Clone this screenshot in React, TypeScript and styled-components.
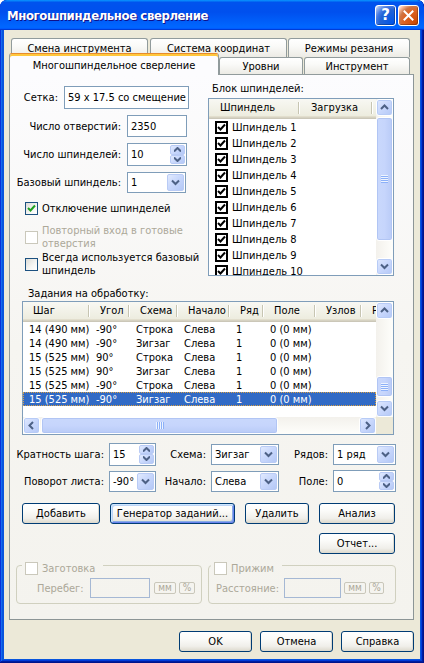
import React from 'react';
import styled, { createGlobalStyle } from 'styled-components';

const UI = `"DejaVu Sans Condensed", "Liberation Sans", sans-serif`;

const GlobalStyle = createGlobalStyle`
  html, body { margin: 0; padding: 0; }
  body { background: #ffffff; font-family: ${UI}; font-size: 11px; color: #000; }
  *, *::before, *::after { box-sizing: border-box; }
`;

/* ---------- window frame ---------- */
const Window = styled.div`
  width: 424px;
  height: 663px;
  display: flex;
  flex-direction: column;
  background: #0855dd;
  border-radius: 7px 7px 0 0;
  overflow: hidden;
  box-shadow: inset -1px -1px #00138c, inset 1px 1px #0831d9, inset -2px -2px #001ea0,
    inset 2px 2px #166aee, inset -3px -3px #003bda, inset 3px 3px #0855dd;
  font-family: ${UI};
  font-size: 11px;
`;

const TitleBar = styled.div`
  flex: 0 0 30px;
  display: flex;
  align-items: center;
  padding: 0 5px 0 7px;
  border-radius: 7px 7px 0 0;
  background: linear-gradient(180deg, #0997ff, #0053ee 8%, #0050ee 40%, #0066ff 88%, #0066ff 93%, #005bff 95%, #003dd7 96%, #003dd7);
`;

const TitleText = styled.div`
  flex: 1;
  color: #fff;
  font-family: "DejaVu Sans Condensed", "Liberation Sans", sans-serif;
  font-weight: bold;
  font-size: 13px;
  letter-spacing: -0.4px;
  text-shadow: 1px 1px #0f1089;
  white-space: nowrap;
`;

const CaptionButtons = styled.div`
  display: flex;
  gap: 2px;
`;

const CaptionBtn = styled.div<{ $kind: 'help' | 'close' }>`
  width: 21px;
  height: 21px;
  border: 1px solid #fff;
  border-radius: 3px;
  display: flex;
  align-items: center;
  justify-content: center;
  color: #fff;
  box-shadow: inset -1px -1px rgba(0, 0, 0, 0.25);
  background: ${p =>
    p.$kind === 'close'
      ? 'radial-gradient(circle at 90% 90%, #cc4600 0%, #dc6527 55%, #cd7546 70%, #ffccb2 90%, #fff 100%)'
      : 'radial-gradient(circle at 90% 90%, #0054e9 0%, #2263d5 55%, #4479e4 70%, #a3bbec 90%, #fff 100%)'};
`;

const HelpGlyph = styled.span`
  font-family: "DejaVu Sans", sans-serif;
  font-weight: bold;
  font-size: 15px;
  line-height: 15px;
`;

const Client = styled.div`
  flex: 1;
  margin: 0 4px 4px;
  background: #ece9d8;
  display: flex;
  flex-direction: column;
  padding: 8px 6px 7px 5px;
`;

/* ---------- tabs ---------- */
const TabRow = styled.div<{ $h: number; $pad: number }>`
  display: flex;
  align-items: flex-end;
  height: ${p => p.$h}px;
  padding-left: ${p => p.$pad}px;
`;

const Tab = styled.div<{ $w: number; $h: number; $ml?: number; $active?: boolean }>`
  width: ${p => p.$w}px;
  height: ${p => p.$h}px;
  flex: 0 0 auto;
  margin-left: ${p => p.$ml ?? 0}px;
  margin-bottom: ${p => (p.$active ? -1 : 0)}px;
  position: ${p => (p.$active ? 'relative' : 'static')};
  z-index: ${p => (p.$active ? 1 : 'auto')};
  border: 1px solid #919b9c;
  border-bottom: none;
  border-top: ${p => (p.$active ? '1px solid #e68b2c' : '1px solid #919b9c')};
  border-radius: 3px 3px 0 0;
  box-shadow: ${p => (p.$active ? 'inset 0 2px #ffc73c' : 'none')};
  background: ${p =>
    p.$active ? '#fcfcfe' : 'linear-gradient(180deg, #ffffff 0%, #fafaf8 40%, #ecebe5 100%)'};
  display: flex;
  align-items: center;
  justify-content: center;
  padding-top: ${p => (p.$active ? 1 : 0)}px;
  white-space: nowrap;
`;

const Panel = styled.div`
  height: 546px;
  border: 1px solid #919b9c;
  border-right-color: #8c9596;
  border-bottom-color: #8c9596;
  background: linear-gradient(180deg, #fcfcfe 0%, #f6f5f1 50%, #f4f3ee 100%);
  display: flex;
  flex-direction: column;
`;

/* ---------- top section ---------- */
const TopSection = styled.div`
  display: flex;
  height: 202px;
`;

const LeftForm = styled.div`
  width: 198px;
  display: flex;
  flex-direction: column;
  padding-top: 11px;
`;

const FieldRow = styled.div<{ $labelW: number; $mt: number }>`
  display: grid;
  grid-template-columns: ${p => p.$labelW}px auto;
  column-gap: 6px;
  align-items: center;
  justify-content: start;
  margin-top: ${p => p.$mt}px;
`;

const FieldLabel = styled.span<{ $dim?: boolean; $left?: boolean }>`
  text-align: ${p => (p.$left ? 'left' : 'right')};
  white-space: nowrap;
  color: ${p => (p.$dim ? '#aca899' : '#000')};
`;

const Box = styled.div<{ $w: number; $h: number; $dim?: boolean }>`
  width: ${p => p.$w}px;
  height: ${p => p.$h}px;
  border: 1px solid ${p => (p.$dim ? '#a5b8d4' : '#7f9db9')};
  background: ${p => (p.$dim ? 'transparent' : '#fff')};
  display: flex;
  align-items: stretch;
  padding: 1px;
`;

const BoxText = styled.span`
  flex: 1;
  display: flex;
  align-items: center;
  padding-left: 2px;
  white-space: nowrap;
  overflow: hidden;
`;

const DropBtn = styled.span`
  width: 17px;
  flex: 0 0 17px;
  display: flex;
  align-items: center;
  justify-content: center;
  border: 1px solid #b9cbf5;
  border-radius: 2px;
  background: linear-gradient(135deg, #e1eafe 0%, #c9d8fc 45%, #b4c8f6 100%);
`;

const SpinCol = styled.span`
  width: 15px;
  flex: 0 0 15px;
  display: flex;
  flex-direction: column;
`;

const SpinBtn = styled.span`
  flex: 1;
  display: flex;
  align-items: center;
  justify-content: center;
  border: 1px solid #b9cbf5;
  border-radius: 2px;
  background: linear-gradient(135deg, #e1eafe 0%, #c9d8fc 45%, #b4c8f6 100%);
`;

const CheckRow = styled.div<{ $mt: number; $dim?: boolean; $pl?: number }>`
  display: flex;
  align-items: center;
  gap: 4px;
  margin-top: ${p => p.$mt}px;
  padding-left: ${p => p.$pl ?? 15}px;
  line-height: 13px;
  color: ${p => (p.$dim ? '#aca899' : '#000')};
  white-space: nowrap;
`;

const CheckBox = styled.span<{ $dim?: boolean }>`
  flex: 0 0 13px;
  width: 13px;
  height: 13px;
  border: 1px solid ${p => (p.$dim ? '#cac8bb' : '#1c5180')};
  background: ${p => (p.$dim ? '#fff' : 'linear-gradient(135deg, #dcdcd7 0%, #f6f6f4 60%, #ffffff 100%)')};
  display: flex;
  align-items: center;
  justify-content: center;
`;

/* ---------- spindle list ---------- */
const SpindleBlock = styled.div`
  width: 186px;
  display: flex;
  flex-direction: column;
  padding-top: 7px;
`;

const BlockLabel = styled.div<{ $pl: number }>`
  line-height: 13px;
  padding-left: ${p => p.$pl}px;
  white-space: nowrap;
`;

const ListFrame = styled.div<{ $w: number; $h: number; $mt: number; $ml?: number }>`
  width: ${p => p.$w}px;
  height: ${p => p.$h}px;
  margin-top: ${p => p.$mt}px;
  margin-left: ${p => p.$ml ?? 0}px;
  border: 1px solid #7f9db9;
  background: #fff;
  display: grid;
  grid-template-columns: 1fr 17px;
  grid-template-rows: 1fr auto;
  overflow: hidden;
`;

const ListBody = styled.div`
  overflow: hidden;
  min-width: 0;
`;

const HeaderRow = styled.div`
  height: 20px;
  display: flex;
  background: linear-gradient(180deg, #f8f8f3 0%, #ebeadb 100%);
  box-shadow: inset 0 -1px #cbc7b8, inset 0 -2px #d6d2c2, inset 0 -3px #e2decd;
  white-space: nowrap;
`;

const HeadCell = styled.div<{ $w: number; $pl: number }>`
  flex: 0 0 ${p => p.$w}px;
  position: relative;
  padding-left: ${p => p.$pl}px;
  line-height: 17px;
  overflow: hidden;
  &::after {
    content: '';
    position: absolute;
    right: 0;
    top: 3px;
    bottom: 5px;
    width: 2px;
    border-left: 1px solid #c7c5b2;
    border-right: 1px solid #ffffff;
  }
`;

const SpindleRow = styled.div`
  height: 16px;
  display: flex;
  align-items: center;
  gap: 4px;
  padding-left: 6px;
  white-space: nowrap;
`;

const ListCheck = styled.span`
  width: 13px;
  height: 13px;
  flex: 0 0 13px;
  border: 2px solid #000;
  background: #fff;
  display: flex;
  align-items: center;
  justify-content: center;
`;

/* ---------- scrollbars ---------- */
const VScroll = styled.div`
  display: flex;
  flex-direction: column;
  background: linear-gradient(90deg, #f3f1ec 0%, #fefefb 100%);
`;

const HScroll = styled.div`
  height: 17px;
  display: flex;
  background: linear-gradient(180deg, #f3f1ec 0%, #fefefb 100%);
`;

const Corner = styled.div`
  background: #ece9d8;
`;

const ScrollBtn = styled.div`
  width: 17px;
  height: 17px;
  flex: 0 0 17px;
  display: flex;
  align-items: center;
  justify-content: center;
  border: 1px solid #fff;
  border-radius: 3px;
  background: linear-gradient(135deg, #e0e9fe 0%, #c8d7fc 50%, #b4c8f6 100%);
  box-shadow: inset 0 0 0 1px #b7cbf6;
`;

const Track = styled.div<{ $dir: 'v' | 'h' }>`
  flex: 1;
  display: flex;
  flex-direction: ${p => (p.$dir === 'v' ? 'column' : 'row')};
  min-width: 0;
  min-height: 0;
`;

const Thumb = styled.div<{ $dir: 'v' | 'h'; $size: number; $offset: number }>`
  ${p => (p.$dir === 'v' ? `height: ${p.$size}px; margin-top: ${p.$offset}px;` : `width: ${p.$size}px; margin-left: ${p.$offset}px;`)}
  flex: 0 0 auto;
  display: flex;
  align-items: center;
  justify-content: center;
  border: 1px solid #fff;
  border-radius: 3px;
  background: ${p =>
    p.$dir === 'v'
      ? 'linear-gradient(90deg, #c9d8fc 0%, #c6d5fc 50%, #b9cbf7 100%)'
      : 'linear-gradient(180deg, #c9d8fc 0%, #c6d5fc 50%, #b9cbf7 100%)'};
  box-shadow: inset 0 0 0 1px #b1c5f4;
`;

/* ---------- task list ---------- */
const SectionLabel = styled.div<{ $mt: number; $pl: number }>`
  margin-top: ${p => p.$mt}px;
  padding-left: ${p => p.$pl}px;
  line-height: 13px;
`;

const TaskRow = styled.div<{ $sel?: boolean }>`
  height: 14px;
  display: flex;
  align-items: center;
  white-space: nowrap;
  background: ${p => (p.$sel ? '#316ac5' : 'transparent')};
  color: ${p => (p.$sel ? '#fff' : '#000')};
  outline: ${p => (p.$sel ? '1px dotted #d9a043' : 'none')};
  outline-offset: -1px;
`;

const TaskCell = styled.div<{ $w: number }>`
  flex: 0 0 ${p => p.$w}px;
  padding-left: 6px;
  overflow: hidden;
`;

/* ---------- controls ---------- */
const ControlGrid = styled.div`
  margin-top: 8px;
  display: grid;
  grid-template-columns: 94px 47px 45px 68px 44px 63px;
  grid-auto-rows: 22px;
  column-gap: 5px;
  row-gap: 5px;
  align-items: center;
`;

const ButtonGrid = styled.div`
  margin-top: 11px;
  margin-left: 12px;
  display: grid;
  grid-template-columns: 78px 125px 64px 76px;
  column-gap: 10px;
  row-gap: 9px;
`;

const Btn = styled.div<{ $w?: number; $focus?: boolean; $col?: number }>`
  ${p => (p.$w ? `width: ${p.$w}px;` : '')}
  ${p => (p.$col ? `grid-column: ${p.$col};` : '')}
  height: 21px;
  border: 1px solid #003c74;
  border-radius: 3px;
  background: linear-gradient(180deg, #ffffff 0%, #fbfbf9 35%, #f0efea 75%, #e3e0d6 92%, #d6d0c5 100%);
  box-shadow: ${p =>
    p.$focus
      ? 'inset 1px 1px #cee7ff, inset -1px -1px #6982ee, inset 2px 2px #bcd4f6, inset -2px -2px #89ade4'
      : 'inset -1px -1px #dedbd0'};
  display: flex;
  align-items: center;
  justify-content: center;
  white-space: nowrap;
`;

/* ---------- group boxes ---------- */
const GroupsRow = styled.div`
  margin-top: 7px;
  margin-left: 6px;
  display: flex;
  gap: 6px;
`;

const Group = styled.fieldset<{ $w: number }>`
  width: ${p => p.$w}px;
  min-width: 0;
  margin: 0;
  padding: 9px 0 5px 0;
  border: 1px solid #d0d0bf;
  border-radius: 4px;
`;

const GroupLegend = styled.legend<{ $ml: number }>`
  height: 8px;
  margin-left: ${p => p.$ml}px;
  padding: 0 8px 0 3px;
  display: flex;
  align-items: flex-start;
  overflow: visible;
  line-height: 13px;
  color: #aca899;
`;

const GroupLine = styled.div<{ $pl: number; $labelW: number }>`
  display: grid;
  grid-template-columns: ${p => p.$labelW}px auto auto auto;
  align-items: center;
  column-gap: 3px;
  padding-left: ${p => p.$pl}px;
  justify-content: start;
`;

const MiniBtn = styled.div<{ $w: number; $ml?: number }>`
  width: ${p => p.$w}px;
  height: 12px;
  margin-left: ${p => p.$ml ?? 0}px;
  border: 1px solid #c9c7ba;
  border-radius: 2px;
  color: #aca899;
  font-size: 10px;
  line-height: 10px;
  display: flex;
  align-items: center;
  justify-content: center;
  background: #f5f4ef;
`;

const DialogButtons = styled.div`
  margin-top: 11px;
  display: flex;
  justify-content: flex-end;
  gap: 8px;
`;

/* ---------- drawings ---------- */
type Dir = 'up' | 'down' | 'left' | 'right';
const arrowPaths: Record<Dir, string> = {
  down: 'M1 2.5 L4.5 6 L8 2.5',
  up: 'M1 6 L4.5 2.5 L8 6',
  left: 'M6 1 L2.5 4.5 L6 8',
  right: 'M3 1 L6.5 4.5 L3 8',
};
const Arrow = ({ dir, small }: { dir: Dir; small?: boolean }) => (
  <svg width={small ? 7 : 9} height={small ? 5 : 9} viewBox={small ? (dir === 'up' ? '1 1.5 7 5' : '1 2 7 5') : '0 0 9 9'}>
    <path d={arrowPaths[dir]} fill="none" stroke="#4d6185" strokeWidth={2} />
  </svg>
);

const Grip = ({ dir }: { dir: 'v' | 'h' }) => (
  <svg width={dir === 'v' ? 7 : 8} height={dir === 'v' ? 8 : 7} viewBox={dir === 'v' ? '0 0 7 8' : '0 0 8 7'}>
    {[0, 2, 4, 6].map(o =>
      dir === 'v' ? (
        <g key={o}>
          <rect x={0} y={o} width={7} height={1} fill="#eef4fe" />
          <rect x={0} y={o + 1} width={7} height={1} fill="#8cb0f8" />
        </g>
      ) : (
        <g key={o}>
          <rect x={o} y={0} width={1} height={7} fill="#eef4fe" />
          <rect x={o + 1} y={0} width={1} height={7} fill="#8cb0f8" />
        </g>
      )
    )}
  </svg>
);

const GreenCheck = () => (
  <svg width={9} height={9} viewBox="0 0 9 9">
    <path d="M1 4 L3.5 6.5 L8 1.5" fill="none" stroke="#21a121" strokeWidth={2} />
  </svg>
);

const BlackCheck = () => (
  <svg width={9} height={9} viewBox="0 0 9 9">
    <path d="M1 4 L3.5 6.5 L8 1.5" fill="none" stroke="#000" strokeWidth={2} />
  </svg>
);

/* ---------- composed controls ---------- */
const Combo = ({ w, h = 21, value }: { w: number; h?: number; value: string }) => (
  <Box $w={w} $h={h}>
    <BoxText>{value}</BoxText>
    <DropBtn>
      <Arrow dir="down" />
    </DropBtn>
  </Box>
);

const Spin = ({ w, h = 23, value }: { w: number; h?: number; value: string }) => (
  <Box $w={w} $h={h}>
    <BoxText>{value}</BoxText>
    <SpinCol>
      <SpinBtn>
        <Arrow dir="up" small />
      </SpinBtn>
      <SpinBtn>
        <Arrow dir="down" small />
      </SpinBtn>
    </SpinCol>
  </Box>
);

const VBar = ({ size, offset }: { size: number; offset: number }) => (
  <VScroll>
    <ScrollBtn>
      <Arrow dir="up" />
    </ScrollBtn>
    <Track $dir="v">
      <Thumb $dir="v" $size={size} $offset={offset}>
        <Grip dir="v" />
      </Thumb>
    </Track>
    <ScrollBtn>
      <Arrow dir="down" />
    </ScrollBtn>
  </VScroll>
);

const spindles = Array.from({ length: 10 }, (_, i) => `Шпиндель ${i + 1}`);

const taskCols = [
  { title: 'Шаг', w: 67 },
  { title: 'Угол', w: 40 },
  { title: 'Схема', w: 48 },
  { title: 'Начало', w: 52 },
  { title: 'Ряд', w: 34 },
  { title: 'Поле', w: 52 },
  { title: 'Узлов', w: 46 },
  { title: 'Размер', w: 60 },
];

const tasks = [
  ['14 (490 мм)', '-90°', 'Строка', 'Слева', '1', '0 (0 мм)'],
  ['14 (490 мм)', '-90°', 'Зигзаг', 'Слева', '1', '0 (0 мм)'],
  ['15 (525 мм)', '90°', 'Строка', 'Слева', '1', '0 (0 мм)'],
  ['15 (525 мм)', '90°', 'Зигзаг', 'Слева', '1', '0 (0 мм)'],
  ['15 (525 мм)', '-90°', 'Строка', 'Слева', '1', '0 (0 мм)'],
  ['15 (525 мм)', '-90°', 'Зигзаг', 'Слева', '1', '0 (0 мм)'],
];

export default function App() {
  return (
    <>
      <GlobalStyle />
      <Window>
        <TitleBar>
          <TitleText>Многошпиндельное сверление</TitleText>
          <CaptionButtons>
            <CaptionBtn $kind="help">
              <HelpGlyph>?</HelpGlyph>
            </CaptionBtn>
            <CaptionBtn $kind="close">
              <svg width={11} height={11} viewBox="0 0 11 11">
                <path d="M1.5 1.5 L9.5 9.5 M9.5 1.5 L1.5 9.5" stroke="#fff" strokeWidth={2} strokeLinecap="square" />
              </svg>
            </CaptionBtn>
          </CaptionButtons>
        </TitleBar>

        <Client>
          <TabRow $h={19} $pad={2}>
            <Tab $w={137} $h={19}>Смена инструмента</Tab>
            <Tab $w={137} $h={19} $ml={2}>Система координат</Tab>
            <Tab $w={122} $h={19} $ml={1}>Режимы резания</Tab>
          </TabRow>
          <TabRow $h={17} $pad={0}>
            <Tab $w={210} $h={22} $active>Многошпиндельное сверление</Tab>
            <Tab $w={84} $h={17}>Уровни</Tab>
            <Tab $w={106} $h={17} $ml={1}>Инструмент</Tab>
          </TabRow>

          <Panel>
            <TopSection>
              <LeftForm>
                <FieldRow $labelW={48} $mt={0}>
                  <FieldLabel>Сетка:</FieldLabel>
                  <Box $w={125} $h={23}>
                    <BoxText>59 x 17.5 со смещение</BoxText>
                  </Box>
                </FieldRow>
                <FieldRow $labelW={111} $mt={6}>
                  <FieldLabel>Число отверстий:</FieldLabel>
                  <Box $w={60} $h={22}>
                    <BoxText>2350</BoxText>
                  </Box>
                </FieldRow>
                <FieldRow $labelW={111} $mt={6}>
                  <FieldLabel>Число шпинделей:</FieldLabel>
                  <Spin w={60} value="10" />
                </FieldRow>
                <FieldRow $labelW={111} $mt={6}>
                  <FieldLabel>Базовый шпиндель:</FieldLabel>
                  <Combo w={59} value="1" />
                </FieldRow>
                <CheckRow $mt={9}>
                  <CheckBox>
                    <GreenCheck />
                  </CheckBox>
                  <span>Отключение шпинделей</span>
                </CheckRow>
                <CheckRow $mt={9} $dim>
                  <CheckBox $dim />
                  <span>
                    Повторный вход в готовые
                    <br />
                    отверстия
                  </span>
                </CheckRow>
                <CheckRow $mt={1}>
                  <CheckBox />
                  <span>
                    Всегда используется базовый
                    <br />
                    шпиндель
                  </span>
                </CheckRow>
              </LeftForm>

              <SpindleBlock>
                <BlockLabel $pl={4}>Блок шпинделей:</BlockLabel>
                <ListFrame $w={186} $h={178} $mt={3}>
                  <ListBody>
                    <HeaderRow>
                      <HeadCell $w={91} $pl={11}>Шпиндель</HeadCell>
                      <HeadCell $w={73} $pl={11}>Загрузка</HeadCell>
                    </HeaderRow>
                    {spindles.map(s => (
                      <SpindleRow key={s}>
                        <ListCheck>
                          <BlackCheck />
                        </ListCheck>
                        <span>{s}</span>
                      </SpindleRow>
                    ))}
                  </ListBody>
                  <VBar size={124} offset={1} />
                </ListFrame>
              </SpindleBlock>
            </TopSection>

            <SectionLabel $mt={10} $pl={18}>Задания на обработку:</SectionLabel>
            <ListFrame $w={372} $h={134} $mt={1} $ml={12}>
              <ListBody>
                <HeaderRow>
                  {taskCols.map(c => (
                    <HeadCell key={c.title} $w={c.w} $pl={10}>
                      {c.title}
                    </HeadCell>
                  ))}
                </HeaderRow>
                {tasks.map((r, i) => (
                  <TaskRow key={i} $sel={i === tasks.length - 1}>
                    {taskCols.map((c, j) => (
                      <TaskCell key={c.title} $w={c.w}>
                        {r[j] ?? ''}
                      </TaskCell>
                    ))}
                  </TaskRow>
                ))}
              </ListBody>
              <VBar size={21} offset={57} />
              <HScroll>
                <ScrollBtn>
                  <Arrow dir="left" />
                </ScrollBtn>
                <Track $dir="h">
                  <Thumb $dir="h" $size={237} $offset={1}>
                    <Grip dir="h" />
                  </Thumb>
                </Track>
                <ScrollBtn>
                  <Arrow dir="right" />
                </ScrollBtn>
              </HScroll>
              <Corner />
            </ListFrame>

            <ControlGrid>
              <FieldLabel>Кратность шага:</FieldLabel>
              <Spin w={47} h={23} value="15" />
              <FieldLabel>Схема:</FieldLabel>
              <Combo w={68} value="Зигзаг" />
              <FieldLabel>Рядов:</FieldLabel>
              <Combo w={63} value="1 ряд" />

              <FieldLabel>Поворот листа:</FieldLabel>
              <Combo w={47} value="-90°" />
              <FieldLabel>Начало:</FieldLabel>
              <Combo w={68} value="Слева" />
              <FieldLabel>Поле:</FieldLabel>
              <Spin w={63} h={22} value="0" />
            </ControlGrid>

            <ButtonGrid>
              <Btn>Добавить</Btn>
              <Btn $focus>Генератор заданий...</Btn>
              <Btn>Удалить</Btn>
              <Btn>Анализ</Btn>
              <Btn $col={4}>Отчет...</Btn>
            </ButtonGrid>

            <GroupsRow>
              <Group $w={186}>
                <GroupLegend $ml={5}>
                  <CheckRow $mt={1} $pl={0} $dim>
                    <CheckBox $dim />
                    <span>Заготовка</span>
                  </CheckRow>
                </GroupLegend>
                <GroupLine $pl={20} $labelW={50}>
                  <FieldLabel $dim $left>Перебег:</FieldLabel>
                  <Box $w={60} $h={20} $dim />
                  <MiniBtn $w={22} $ml={1}>мм</MiniBtn>
                  <MiniBtn $w={16}>%</MiniBtn>
                </GroupLine>
              </Group>
              <Group $w={188}>
                <GroupLegend $ml={2}>
                  <CheckRow $mt={1} $pl={0} $dim>
                    <CheckBox $dim />
                    <span>Прижим</span>
                  </CheckRow>
                </GroupLegend>
                <GroupLine $pl={7} $labelW={65}>
                  <FieldLabel $dim $left>Расстояние:</FieldLabel>
                  <Box $w={57} $h={20} $dim />
                  <MiniBtn $w={22}>мм</MiniBtn>
                  <MiniBtn $w={15}>%</MiniBtn>
                </GroupLine>
              </Group>
            </GroupsRow>
          </Panel>

          <DialogButtons>
            <Btn $w={73}>OK</Btn>
            <Btn $w={73}>Отмена</Btn>
            <Btn $w={73}>Справка</Btn>
          </DialogButtons>
        </Client>
      </Window>
    </>
  );
}
